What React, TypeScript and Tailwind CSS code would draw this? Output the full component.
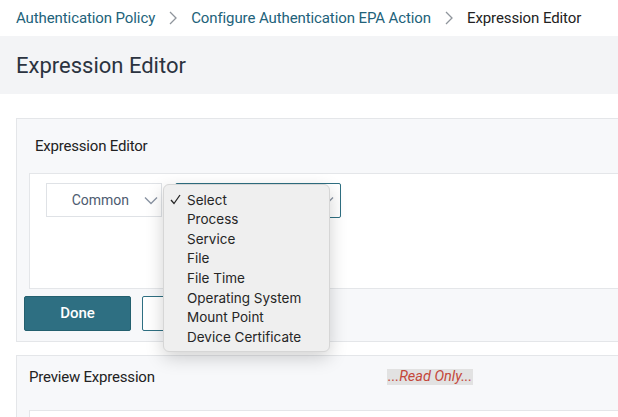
import React from "react";

const Chevron = ({ className = "" }: { className?: string }) => (
  <svg width="14" height="9" viewBox="0 0 14 9" className={className} fill="none">
    <path d="M1 1.5 L7 7.5 L13 1.5" stroke="#8a94a3" strokeWidth="1.4" />
  </svg>
);

const Crumb = () => (
  <svg width="10" height="14" viewBox="0 0 10 14" fill="none" className="mx-[13px]">
    <path d="M2 1 L8 7 L2 13" stroke="#8f959c" strokeWidth="1.3" />
  </svg>
);

export default function App() {
  const items = [
    "Select",
    "Process",
    "Service",
    "File",
    "File Time",
    "Operating System",
    "Mount Point",
    "Device Certificate",
  ];
  return (
    <div
      className="relative w-[618px] h-[417px] overflow-hidden bg-white"
      style={{ fontFamily: "Roboto, 'Liberation Sans', sans-serif" }}
    >
      <div className="h-[36px] flex items-center pl-4 text-[15px] tracking-[-0.1px]">
        <span className="text-[#22627a]">Authentication Policy</span>
        <Crumb />
        <span className="text-[#22627a]">Configure Authentication EPA Action</span>
        <Crumb />
        <span className="text-[#222]">Expression Editor</span>
      </div>
      <div className="h-[58px] bg-[#f3f4f6] flex items-center pl-4 text-[22px] text-[#2b3340]">
        Expression Editor
      </div>
      <div className="pt-[24px] pl-4">
        <div className="w-[640px] h-[224px] border border-[#e4e6e9] bg-[#f7f8fa] flex flex-col">
          <div className="h-[54px] flex items-center pl-[18px] text-[15px] tracking-[-0.2px] text-[#222]">
            Expression Editor
          </div>
          <div className="ml-[12px] h-[116px] border border-[#e4e6e9] bg-white pt-[9px] pl-[16px] flex gap-[13px]">
            <div className="w-[116px] h-[34px] border border-[#dfe2e6] flex items-center justify-end pr-[3px] gap-[15px]">
              <span className="text-[14px] text-[#4d5b70]">Common</span>
              <Chevron />
            </div>
            <div className="w-[166px] h-[35px] border border-[#2e6f82] rounded-[2px] flex items-center justify-end pr-[6px]">
              <Chevron />
            </div>
          </div>
          <div className="mt-[7px] ml-[7px] flex gap-[11px]">
            <div className="w-[107px] h-[35px] bg-[#2e6f82] border border-[#24606f] rounded-[2px] flex items-center justify-center text-white text-[15px] font-medium">
              Done
            </div>
            <div className="w-[100px] h-[35px] bg-white border border-[#2e6f82] rounded-[2px]" />
          </div>
        </div>
        <div className="mt-[13px] w-[640px] h-[80px] border border-[#e4e6e9] bg-[#f7f8fa]">
          <div className="h-[43px] flex items-center pl-[12px] text-[15px] tracking-[-0.2px] text-[#222] relative">
            Preview Expression
            <span className="absolute left-[370px] top-[13px] h-[16px] px-[1px] bg-[#e2e2e2] text-[#c4473a] italic text-[14.5px] leading-[16px] tracking-normal">
              ...Read Only...
            </span>
          </div>
          <div className="ml-[12px] mt-[11px] h-[40px] border border-[#e4e6e9] bg-white" />
        </div>
      </div>

      <div
        className="absolute left-[163px] top-[184px] w-[167px] h-[168px] bg-[#efefef] rounded-[6px] border border-[#d6d6d6] shadow-[0_6px_18px_rgba(0,0,0,0.18)] pt-[5px]"
        style={{ fontFamily: "Inter, 'Noto Sans', sans-serif" }}
      >
        {items.map((t, i) => (
          <div key={t} className="h-[19.6px] flex items-center text-[13.5px] text-[#262626]">
            <span className="w-[23px] pl-[6px] flex items-center">
              {i === 0 ? (
                <svg width="11" height="11" viewBox="0 0 11 11" fill="none">
                  <path d="M1 6 L4 9.5 L10 1" stroke="#262626" strokeWidth="1.3" />
                </svg>
              ) : null}
            </span>
            <span>{t}</span>
          </div>
        ))}
      </div>
    </div>
  );
}
